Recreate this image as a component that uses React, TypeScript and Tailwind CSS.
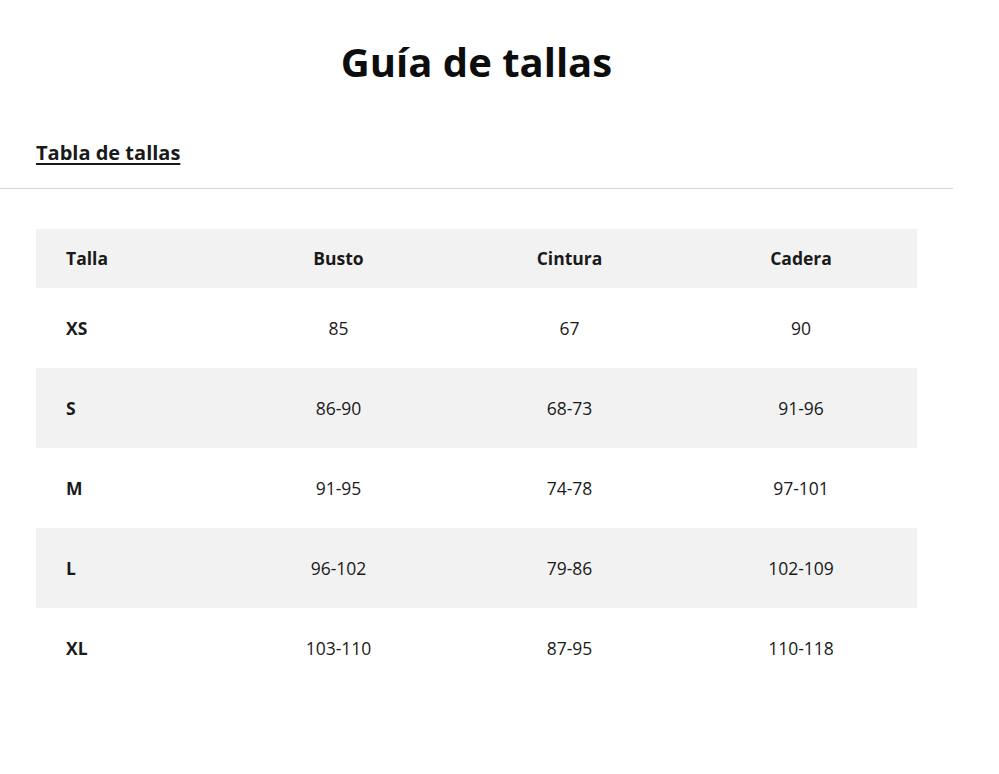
const rows = [
  { talla: "XS", busto: "85", cintura: "67", cadera: "90" },
  { talla: "S", busto: "86-90", cintura: "68-73", cadera: "91-96" },
  { talla: "M", busto: "91-95", cintura: "74-78", cadera: "97-101" },
  { talla: "L", busto: "96-102", cintura: "79-86", cadera: "102-109" },
  { talla: "XL", busto: "103-110", cintura: "87-95", cadera: "110-118" },
]

export default function App() {
  return (
    <div className="min-h-[774px] bg-white font-['Open_Sans',sans-serif] text-[#1a1a1a]">
      <div className="w-[953px]">
        <h1 className="pt-[30px] text-center text-[40px] font-bold leading-[64px] text-[#0d0d0d]">Guía de tallas</h1>

        <div className="mt-[46px] border-b border-[#d6d6d6] px-9 pb-[22px]">
          <span className="text-[20px] font-bold leading-[26px] underline underline-offset-[3px]">Tabla de tallas</span>
        </div>

        <div className="mt-[40px] px-9">
          <table className="w-[881px] border-collapse text-[17.5px]">
            <thead>
              <tr className="h-[59px] bg-[#f2f2f2]">
                <th className="w-[187px] pl-[30px] text-left font-bold">Talla</th>
                <th className="w-[231px] text-center font-bold">Busto</th>
                <th className="w-[231px] text-center font-bold">Cintura</th>
                <th className="w-[232px] text-center font-bold">Cadera</th>
              </tr>
            </thead>
            <tbody>
              {rows.map((r, i) => (
                <tr key={r.talla} className={i % 2 === 1 ? "h-[80px] bg-[#f2f2f2]" : "h-[80px]"}>
                  <td className="pl-[30px] font-bold">{r.talla}</td>
                  <td className="text-center">{r.busto}</td>
                  <td className="text-center">{r.cintura}</td>
                  <td className="text-center">{r.cadera}</td>
                </tr>
              ))}
            </tbody>
          </table>
        </div>
      </div>
    </div>
  )
}
